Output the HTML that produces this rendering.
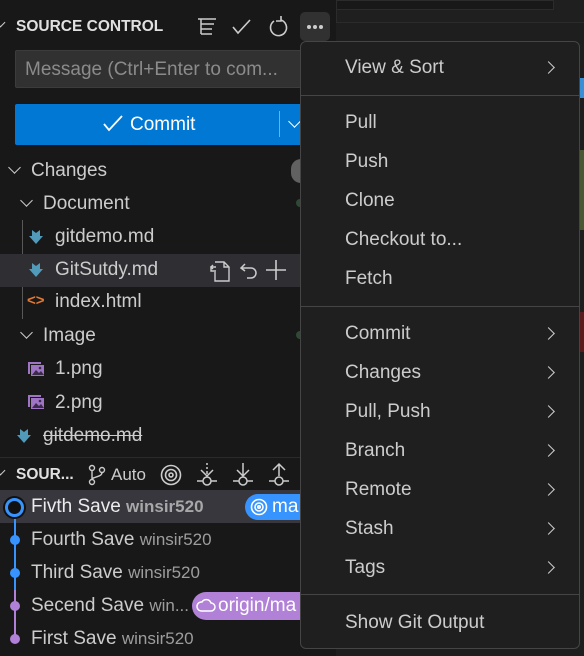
<!DOCTYPE html>
<html><head><meta charset="utf-8"><style>
*{margin:0;padding:0;box-sizing:border-box}
body{width:584px;height:656px;overflow:hidden;background:#181818;font-family:"Liberation Sans",sans-serif;color:#cccccc;position:relative}
.a{position:absolute;white-space:nowrap}
.t{font-size:19px;line-height:24px}
.m{font-size:19px;line-height:24px;color:#cccccc;left:44px}
.chev{position:absolute;left:243px;width:9px;height:9px;border-right:1.8px solid #ccc;border-top:1.8px solid #ccc;transform:rotate(45deg)}
.sep{position:absolute;left:0;right:0;height:1px;background:#454545}
.dn{position:absolute;width:9px;height:9px;border-right:1.6px solid #ccc;border-bottom:1.6px solid #ccc;transform:rotate(45deg)}
.g{color:#9d9d9d}
svg{position:absolute}
</style></head><body>
<div class="a" style="left:336px;top:0;width:248px;height:656px;background:#1f1f1f;border-left:1px solid #2b2b2b"></div>
<div class="a" style="left:336px;top:0;width:218px;height:10px;background:#181818;border:1px solid #2b2b2b"></div>
<div class="a" style="left:336px;top:22px;width:248px;height:634px;background:#1e1e1e;border-top:1px solid #2b2b2b"></div>
<div class="a" style="left:579px;top:150px;width:5px;height:80px;background:#4b5632"></div>
<div class="a" style="left:579px;top:312px;width:5px;height:40px;background:#5a1d1d"></div>
<div class="a" style="left:580px;top:78px;width:4px;height:20px;background:#3a8ed6"></div>

<div class="dn" style="left:-3px;top:19px;width:7px;height:7px"></div>
<div class="a" style="left:16px;top:17px;font-size:15.5px;font-weight:bold;color:#e0e0e0;line-height:20px">SOURCE CONTROL</div>
<svg style="left:196px;top:16px" width="22" height="22" viewBox="0 0 22 22" fill="none" stroke="#ccc" stroke-width="1.5"><path d="M2 3h18M5 3v15M5 8h13M5 13h11M5 18h11"/></svg>
<svg style="left:230px;top:16px" width="22" height="22" viewBox="0 0 22 22" fill="none" stroke="#ccc" stroke-width="1.6"><path d="M3 11l5 6L20 4"/></svg>
<svg style="left:267px;top:15px" width="22" height="24" viewBox="0 0 22 24" fill="none" stroke="#ccc" stroke-width="1.6"><path d="M7 6A8 8 0 1 0 14 5"/><path d="M14 1v5h-5" /></svg>
<div class="a" style="left:300px;top:12px;width:30px;height:29px;background:#313131;border-radius:5px"></div>
<div class="a" style="left:307px;top:25px;width:4px;height:4px;border-radius:2px;background:#ccc;box-shadow:6px 0 #ccc,12px 0 #ccc"></div>

<div class="a" style="left:15px;top:50px;width:300px;height:38px;background:#313131;border:1px solid #3c3c3c;border-radius:2px"></div>
<div class="a t" style="left:25px;top:58px;color:#8b8b8b">Message (Ctrl+Enter to com...</div>
<div class="a" style="left:15px;top:104px;width:300px;height:41px;background:#0078d4;border-radius:2px"></div>
<svg style="left:102px;top:114px" width="22" height="20" viewBox="0 0 22 20" fill="none" stroke="#fff" stroke-width="1.8"><path d="M2 10l5 6L20 2"/></svg>
<div class="a t" style="left:130px;top:113px;color:#fff">Commit</div>
<div class="a" style="left:279px;top:111px;width:1px;height:26px;background:#6fb0e6"></div>
<div class="dn" style="left:290px;top:117px;border-color:#fff"></div>

<div class="dn" style="left:10px;top:163px"></div>
<div class="a t" style="left:31px;top:159px">Changes</div>
<div class="a" style="left:291px;top:159px;width:20px;height:24px;border-radius:12px;background:#616161"></div>
<div class="dn" style="left:22px;top:196px"></div>
<div class="a t" style="left:43px;top:192px">Document</div>
<div class="a" style="left:296px;top:199px;width:8px;height:8px;border-radius:4px;background:#2f4a34"></div>
<div class="a" style="left:22px;top:220px;width:1px;height:99px;background:#585858"></div>
<div class="a" style="left:0;top:254px;width:300px;height:33px;background:#2e2e33"></div>
<svg style="left:28px;top:229px" width="16" height="16" viewBox="0 0 16 16"><path d="M4 1l4 3 4-3v6h3l-7 8-7-8h3z" fill="#519aba"/></svg>
<div class="a t" style="left:55px;top:225px">gitdemo.md</div>
<svg style="left:28px;top:262px" width="16" height="16" viewBox="0 0 16 16"><path d="M4 1l4 3 4-3v6h3l-7 8-7-8h3z" fill="#519aba"/></svg>
<div class="a t" style="left:55px;top:258px">GitSutdy.md</div>
<svg style="left:207px;top:259px" width="26" height="24" viewBox="0 0 26 24" fill="none" stroke="#ccc" stroke-width="1.4"><path d="M8 3h9l5 5v14H8v-9"/><path d="M17 3v5h5"/><path d="M9 8H4v4h5"/><path d="M6 6L4 8l2 2"/></svg>
<svg style="left:237px;top:259px" width="22" height="24" viewBox="0 0 22 24" fill="none" stroke="#ccc" stroke-width="1.5"><path d="M4 9h10a5 5 0 0 1 0 10H10"/><path d="M8 5L4 9l4 3"/></svg>
<svg style="left:264px;top:259px" width="24" height="22" viewBox="0 0 24 22" fill="none" stroke="#ccc" stroke-width="1.6"><path d="M12 1v20M2 11h20"/></svg>
<div class="a" style="left:27px;top:289px;font-size:15px;color:#e37933;font-weight:bold;line-height:24px">&lt;&gt;</div>
<div class="a t" style="left:55px;top:290px">index.html</div>
<div class="dn" style="left:22px;top:328px"></div>
<div class="a t" style="left:43px;top:324px">Image</div>
<div class="a" style="left:296px;top:331px;width:8px;height:8px;border-radius:4px;background:#2f4a34"></div>
<svg style="left:27px;top:361px" width="18" height="16" viewBox="0 0 18 16"><path d="M1 1h13v2H3v10H1z" fill="#a074c4"/><rect x="4" y="4" width="13" height="11" fill="#a074c4"/><path d="M5 14l4-5 3 3 2-2 3 4z" fill="#3b2b4a"/><circle cx="13" cy="7" r="1.3" fill="#3b2b4a"/></svg>
<div class="a t" style="left:55px;top:357px">1.png</div>
<svg style="left:27px;top:394px" width="18" height="16" viewBox="0 0 18 16"><path d="M1 1h13v2H3v10H1z" fill="#a074c4"/><rect x="4" y="4" width="13" height="11" fill="#a074c4"/><path d="M5 14l4-5 3 3 2-2 3 4z" fill="#3b2b4a"/><circle cx="13" cy="7" r="1.3" fill="#3b2b4a"/></svg>
<div class="a t" style="left:55px;top:391px">2.png</div>
<svg style="left:16px;top:428px" width="16" height="16" viewBox="0 0 16 16"><path d="M4 1l4 3 4-3v6h3l-7 8-7-8h3z" fill="#519aba"/></svg>
<div class="a t" style="left:43px;top:424px;text-decoration:line-through">gitdemo.md</div>
<div class="a" style="left:0;top:457px;width:300px;height:1px;background:#2b2b2b"></div>

<div class="dn" style="left:-3px;top:467px;width:7px;height:7px"></div>
<div class="a" style="left:16px;top:465px;font-size:15.5px;font-weight:bold;color:#e0e0e0;line-height:20px">SOUR...</div>
<svg style="left:88px;top:464px" width="18" height="22" viewBox="0 0 18 22" fill="none" stroke="#ccc" stroke-width="1.4"><circle cx="4" cy="4" r="2.5"/><circle cx="4" cy="18" r="2.5"/><circle cx="14" cy="6" r="2.5"/><path d="M4 6.5v9M14 8.5c0 5-10 4-10 7"/></svg>
<div class="a" style="left:111px;top:465px;font-size:17px;line-height:20px">Auto</div>
<svg style="left:160px;top:464px" width="22" height="22" viewBox="0 0 22 22" fill="none" stroke="#ccc" stroke-width="1.6"><circle cx="11" cy="11" r="9.5"/><circle cx="11" cy="11" r="5.5"/><circle cx="11" cy="11" r="2"/></svg>
<svg style="left:196px;top:462px" width="22" height="26" viewBox="0 0 22 26" fill="none" stroke="#ccc" stroke-width="1.5"><path d="M11 1v2M11 5v2M11 9v3M5 8l6 6 6-6"/><circle cx="11" cy="19" r="4"/><path d="M1 19h6M15 19h6"/></svg>
<svg style="left:232px;top:462px" width="22" height="26" viewBox="0 0 22 26" fill="none" stroke="#ccc" stroke-width="1.5"><path d="M11 1v12M5 8l6 6 6-6"/><circle cx="11" cy="19" r="4"/><path d="M1 19h6M15 19h6"/></svg>
<svg style="left:268px;top:462px" width="22" height="26" viewBox="0 0 22 26" fill="none" stroke="#ccc" stroke-width="1.5"><path d="M11 14V2M5 8l6-6 6 6"/><circle cx="11" cy="19" r="4"/><path d="M1 19h6M15 19h6"/></svg>

<div class="a" style="left:0;top:490px;width:300px;height:33px;background:#37373d"></div>
<div class="a" style="left:14px;top:515px;width:2px;height:75px;background:#3794ff"></div>
<div class="a" style="left:14px;top:590px;width:2px;height:45px;background:#b180d7"></div>
<div class="a" style="left:5px;top:498px;width:19px;height:19px;border-radius:10px;border:3px solid #3794ff;background:#111;box-shadow:0 0 0 2px #111"></div>
<div class="a" style="left:10px;top:535px;width:10px;height:10px;border-radius:5px;background:#3794ff"></div>
<div class="a" style="left:10px;top:568px;width:10px;height:10px;border-radius:5px;background:#3794ff"></div>
<div class="a" style="left:10px;top:601px;width:10px;height:10px;border-radius:5px;background:#b180d7"></div>
<div class="a" style="left:10px;top:634px;width:10px;height:10px;border-radius:5px;background:#b180d7"></div>
<div class="a t" style="left:31px;top:495px;color:#ececec">Fivth Save <span style="font-size:17px;color:#a8a8a8;font-weight:bold">winsir520</span></div>
<div class="a t" style="left:31px;top:528px">Fourth Save <span class="g" style="font-size:17px">winsir520</span></div>
<div class="a t" style="left:31px;top:561px">Third Save <span class="g" style="font-size:17px">winsir520</span></div>
<div class="a t" style="left:31px;top:594px">Secend Save <span class="g" style="font-size:17px">win...</span></div>
<div class="a t" style="left:31px;top:627px">First Save <span class="g" style="font-size:17px">winsir520</span></div>
<div class="a" style="left:245px;top:494px;width:70px;height:26px;border-radius:13px;background:#3794ff"></div>
<svg style="left:250px;top:498px" width="18" height="18" viewBox="0 0 18 18" fill="none" stroke="#fff" stroke-width="1.6"><circle cx="9" cy="9" r="7.5"/><circle cx="9" cy="9" r="4"/><circle cx="9" cy="9" r="1.2"/></svg>
<div class="a" style="left:272px;top:496px;font-size:19px;line-height:22px;color:#fff">ma</div>
<div class="a" style="left:192px;top:592px;width:130px;height:28px;border-radius:14px;background:#b180d7"></div>
<svg style="left:196px;top:597px" width="20" height="16" viewBox="0 0 20 16" fill="none" stroke="#fff" stroke-width="1.5"><path d="M5 14h10a4 4 0 0 0 0-8 5 5 0 0 0-9-1A4.5 4.5 0 0 0 5 14z"/></svg>
<div class="a" style="left:218px;top:595px;font-size:19px;line-height:22px;color:#fff">origin/ma</div>

<div class="a" style="left:300px;top:41px;width:280px;height:608px;background:#1f1f1f;border:1px solid #454545;border-radius:6px;overflow:hidden">
 <div class="a m" style="top:14px">View &amp; Sort</div><div class="chev" style="top:21px"></div>
 <div class="sep" style="top:53px"></div>
 <div class="a m" style="top:69px">Pull</div>
 <div class="a m" style="top:108px">Push</div>
 <div class="a m" style="top:147px">Clone</div>
 <div class="a m" style="top:186px">Checkout to...</div>
 <div class="a m" style="top:225px">Fetch</div>
 <div class="sep" style="top:264px"></div>
 <div class="a m" style="top:280px">Commit</div><div class="chev" style="top:287px"></div>
 <div class="a m" style="top:319px">Changes</div><div class="chev" style="top:326px"></div>
 <div class="a m" style="top:358px">Pull, Push</div><div class="chev" style="top:365px"></div>
 <div class="a m" style="top:397px">Branch</div><div class="chev" style="top:404px"></div>
 <div class="a m" style="top:436px">Remote</div><div class="chev" style="top:443px"></div>
 <div class="a m" style="top:475px">Stash</div><div class="chev" style="top:482px"></div>
 <div class="a m" style="top:514px">Tags</div><div class="chev" style="top:521px"></div>
 <div class="sep" style="top:552px"></div>
 <div class="a m" style="top:569px">Show Git Output</div>
</div>
</body></html>
